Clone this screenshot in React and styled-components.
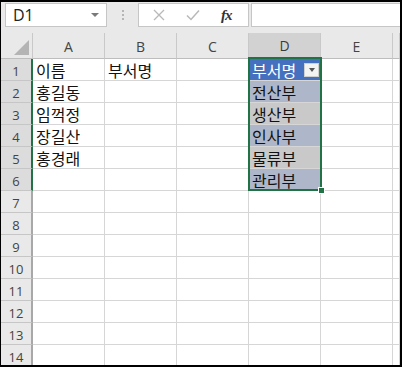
import React from "react";
import styled, { createGlobalStyle } from "styled-components";

const Global = createGlobalStyle`
  html, body { margin: 0; padding: 0; background: #fff; }
  * { box-sizing: border-box; }
`;

const GREEN = "#217346";
const COLS = ["A", "B", "C", "D", "E", ""];
const ROW_COUNT = 14;

const Frame = styled.div`
  width: 402px;
  height: 367px;
  border-style: solid;
  border-color: #000;
  border-width: 2px 2px 2px 1px;
  background: #e9e9e9;
  overflow: hidden;
  font-family: "Segoe UI", "Open Sans", "Noto Sans", sans-serif;
`;

const FormulaBar = styled.div`
  display: flex;
  align-items: stretch;
  height: 31px;
  padding: 1px 0 0 4px;
`;

const Field = styled.div`
  height: 24px;
  background: #fff;
  border: 1px solid #c6c6c6;
  display: flex;
  align-items: center;
`;

const NameBox = styled(Field)`
  width: 102px;
  padding: 0 7px 0 7px;
  justify-content: space-between;
  font-size: 16px;
  color: #222;
`;

const Caret = styled.span`
  width: 0;
  height: 0;
  border-left: 4px solid transparent;
  border-right: 4px solid transparent;
  border-top: 4px solid #7a7a7a;
`;

const Grip = styled.div`
  width: 31px;
  display: flex;
  flex-direction: column;
  align-items: center;
  justify-content: center;
  gap: 2px;
  padding-bottom: 6px;
  span {
    width: 2px;
    height: 2px;
    background: #b5b5b5;
  }
`;

const FxButtons = styled(Field)`
  width: 111px;
  justify-content: space-around;
  padding: 0 6px 0 4px;
`;

const FxLabel = styled.span`
  font-family: "Liberation Serif", "DejaVu Serif", serif;
  font-style: italic;
  font-weight: bold;
  font-size: 15px;
  color: #333;
  letter-spacing: -1px;
`;

const FormulaInput = styled(Field)`
  flex: 1;
  margin-left: 2px;
  border-right: none;
`;

const Sheet = styled.div`
  position: relative;
  display: grid;
  grid-template-columns: 32px repeat(5, 72px) 1fr;
  grid-template-rows: 26px repeat(${ROW_COUNT}, 22px);
  background: #fff;
`;

const Corner = styled.div`
  background: #e9e9e9;
  border-right: 1px solid #c9c9c9;
  border-bottom: 1px solid #bdbdbd;
  position: relative;
  &::after {
    content: "";
    position: absolute;
    right: 3px;
    bottom: 3px;
    width: 0;
    height: 0;
    border-left: 15px solid transparent;
    border-bottom: 15px solid #b4b4b4;
  }
`;

const ColHead = styled.div`
  background: ${(p) => (p.$active ? "#d2d2d2" : "#e9e9e9")};
  border-right: 1px solid #c9c9c9;
  border-bottom: ${(p) => (p.$active ? `2px solid ${GREEN}` : "1px solid #bdbdbd")};
  display: flex;
  align-items: center;
  justify-content: center;
  padding-top: 1px;
  font-size: 14px;
  color: ${(p) => (p.$active ? "#3a3a3a" : "#444")};
`;

const RowHead = styled.div`
  background: ${(p) => (p.$active ? "#dcdcdc" : "#e9e9e9")};
  border-right: 2px solid ${(p) => (p.$active ? GREEN : "#a8a8a8")};
  border-bottom: 1px solid #c6c6c6;
  display: flex;
  align-items: center;
  justify-content: center;
  padding-top: 2px;
  font-size: 13px;
  color: #444;
`;

const Cell = styled.div`
  border-right: 1px solid #d6d6d6;
  border-bottom: 1px solid #d6d6d6;
  background: ${(p) => p.$bg || "#fff"};
  color: ${(p) => p.$color || "#111"};
  display: flex;
  align-items: center;
  justify-content: space-between;
  padding: 1px 1px 0 3px;
  font-family: "Malgun Gothic", "Noto Sans CJK KR", sans-serif;
  font-size: 16px;
  white-space: nowrap;
  overflow: hidden;
`;

const FilterBtn = styled.span`
  width: 15px;
  height: 14px;
  background: #f3f3f3;
  border: 1px solid #d0d0d0;
  display: flex;
  align-items: center;
  justify-content: center;
  &::before {
    content: "";
    border-left: 3.5px solid transparent;
    border-right: 3.5px solid transparent;
    border-top: 4px solid #555;
  }
`;

const Selection = styled.div`
  position: absolute;
  left: 247px;
  top: 24px;
  width: 74px;
  height: 134px;
  border: 2px solid ${GREEN};
  pointer-events: none;
`;

const FillHandle = styled.div`
  position: absolute;
  right: -5px;
  bottom: -5px;
  width: 7px;
  height: 7px;
  background: ${GREEN};
  border: 1px solid #fff;
`;

const data = {
  A: ["이름", "홍길동", "임꺽정", "장길산", "홍경래"],
  B: ["부서명"],
  D: ["부서명", "전산부", "생산부", "인사부", "물류부", "관리부"],
};

const BAND_A = "#aeb7c9";
const BAND_B = "#c9c9c9";

export default function App() {
  const cells = [];
  cells.push(<Corner key="corner" />);
  COLS.forEach((c) =>
    cells.push(
      <ColHead key={"h" + c} $active={c === "D"}>
        {c}
      </ColHead>
    )
  );
  for (let r = 0; r < ROW_COUNT; r++) {
    cells.push(
      <RowHead key={"r" + r} $active={r < 6}>
        {r + 1}
      </RowHead>
    );
    COLS.forEach((c) => {
      const text = (data[c] || [])[r];
      let bg, color;
      if (c === "D" && r < 6) {
        if (r === 0) {
          bg = "#4470bf";
          color = "#fff";
        } else {
          bg = r % 2 === 1 ? BAND_A : BAND_B;
        }
      }
      cells.push(
        <Cell key={c + r} $bg={bg} $color={color}>
          <span>{text}</span>
          {c === "D" && r === 0 && <FilterBtn />}
        </Cell>
      );
    });
  }

  return (
    <>
      <Global />
      <Frame>
        <FormulaBar>
          <NameBox>
            <span>D1</span>
            <Caret />
          </NameBox>
          <Grip>
            <span />
            <span />
            <span />
          </Grip>
          <FxButtons>
            <svg width="12" height="12" viewBox="0 0 12 12">
              <path d="M1 1 L11 11 M11 1 L1 11" stroke="#b9b9b9" strokeWidth="1.3" fill="none" />
            </svg>
            <svg width="14" height="12" viewBox="0 0 14 12">
              <path d="M1 6.5 L5 10.5 L13 1.5" stroke="#b9b9b9" strokeWidth="1.5" fill="none" />
            </svg>
            <FxLabel>fx</FxLabel>
          </FxButtons>
          <FormulaInput />
        </FormulaBar>
        <Sheet>
          {cells}
          <Selection>
            <FillHandle />
          </Selection>
        </Sheet>
      </Frame>
    </>
  );
}
